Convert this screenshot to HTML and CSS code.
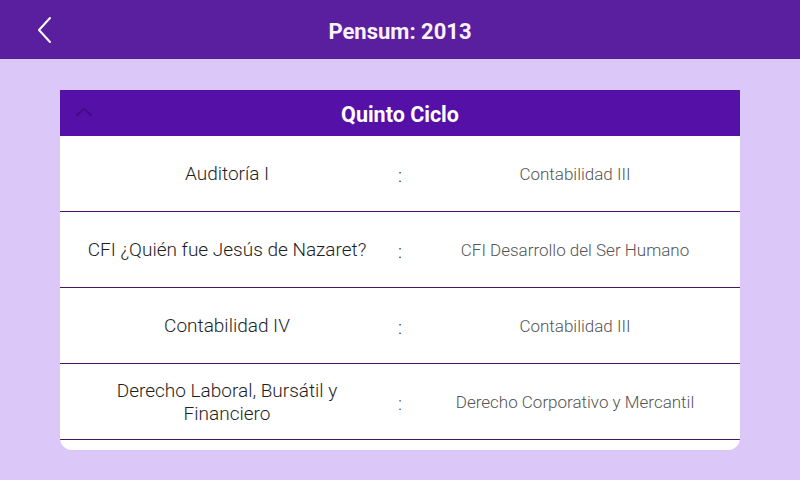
FILE: index.html
```html
<!DOCTYPE html>
<html lang="es">
<head>
<meta charset="utf-8">
<link rel="stylesheet" href="styles.css">
</head>
<body>
<header class="topbar">
  <svg class="back" width="16" height="28" viewBox="0 0 16 28"><path d="M14 2 L3 14 L14 26" fill="none" stroke="#fff" stroke-width="2" stroke-linecap="round" stroke-linejoin="round"/></svg>
  <h1 class="title">Pensum: 2013</h1>
</header>
<main class="content">
  <section class="card">
    <div class="card-head">
      <svg class="chev" width="18" height="10" viewBox="0 0 18 10"><path d="M2 8 L9 2 L16 8" fill="none" stroke="#440c88" stroke-width="2.2" stroke-linecap="round" stroke-linejoin="round"/></svg>
      <h2 class="card-title">Quinto Ciclo</h2>
    </div>
    <div class="row">
      <div class="course">Auditoría I</div>
      <div class="colon">:</div>
      <div class="req">Contabilidad III</div>
    </div>
    <div class="row">
      <div class="course">CFI ¿Quién fue Jesús de Nazaret?</div>
      <div class="colon">:</div>
      <div class="req">CFI Desarrollo del Ser Humano</div>
    </div>
    <div class="row">
      <div class="course">Contabilidad IV</div>
      <div class="colon">:</div>
      <div class="req">Contabilidad III</div>
    </div>
    <div class="row">
      <div class="course">Derecho Laboral, Bursátil y Financiero</div>
      <div class="colon colon-blue">:</div>
      <div class="req">Derecho Corporativo y Mercantil</div>
    </div>
    <div class="card-foot"></div>
  </section>
</main>
</body>
</html>
```
FILE: styles.css
```css
* { box-sizing: border-box; }
html, body { margin: 0; padding: 0; }
body {
  width: 800px;
  height: 480px;
  overflow: hidden;
  background: #dcc7f9;
  font-family: Roboto, "Noto Sans", sans-serif;
}
.topbar {
  height: 59px;
  background: #5a1f9f;
  display: flex;
  align-items: center;
  justify-content: center;
  position: relative;
}
.back {
  position: absolute;
  left: 36px;
  top: 16px;
}
.title {
  margin: 0;
  color: #fbf2fb;
  font-size: 22px;
  font-weight: 700;
  padding-top: 3px;
}
.content {
  padding: 31px 60px 0 60px;
}
.card {
  background: #fff;
  border-radius: 0 0 12px 12px;
  overflow: hidden;
}
.card-head {
  height: 46px;
  background: #5510a8;
  display: flex;
  align-items: center;
  justify-content: center;
  position: relative;
}
.chev {
  position: absolute;
  left: 15px;
  top: 17px;
}
.card-title {
  margin: 0;
  color: #fff;
  font-size: 21.5px;
  font-weight: 700;
  padding-top: 2px;
}
.row {
  height: 76px;
  display: grid;
  grid-template-columns: 334px 12px 334px;
  align-items: center;
  border-bottom: 1px solid #4b1660;
  text-align: center;
}
.course {
  font-size: 19px;
  font-weight: 300;
  color: #1e1e1e;
  line-height: 23px;
  padding: 0 26px;
}
.colon {
  font-size: 19px;
  font-weight: 300;
  color: #222;
  padding-top: 4px;
}
.colon-blue { color: #4b3aa8; }
.req {
  font-size: 17px;
  font-weight: 300;
  color: #555;
  padding-left: 4px;
}
.card-foot {
  height: 10px;
}
```
